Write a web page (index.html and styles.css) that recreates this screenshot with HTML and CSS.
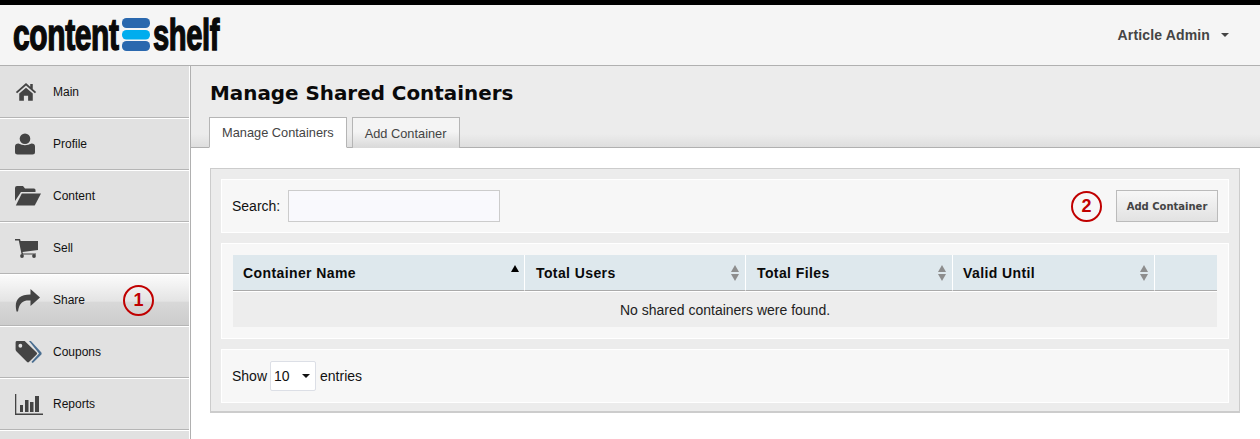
FILE: index.html
```html
<!DOCTYPE html>
<html lang="en">
<head>
<meta charset="utf-8">
<title>Manage Shared Containers</title>
<link rel="stylesheet" href="styles.css">
</head>
<body>
<header class="topbar">
  <div class="logo">
    <span class="logo-word logo-content">content</span>
    <svg class="logo-mark" width="28" height="33" viewBox="0 0 28 33"><rect x="0" y="0" width="28" height="10" rx="4.5" fill="#2a68ae"/><rect x="0" y="12" width="28" height="9.5" rx="4.5" fill="#00adee"/><rect x="0" y="23" width="28" height="10" rx="4.5" fill="#2a68ae"/></svg>
    <span class="logo-word logo-shelf">shelf</span>
  </div>
  <div class="user">Article Admin<span class="caret"></span></div>
</header>
<div class="shell">
  <nav class="sidebar">
    <a class="nav-item"><span class="nav-icon"><svg width="22" height="19" viewBox="0 0 26 22"><path fill="#444" d="M13 1 L1 11.5 L2.5 13 L13 4 L23.5 13 L25 11.5 L21 8 V2 H18 V5.4 Z M5 13.5 L13 6.5 L21 13.5 V22 H15.500 V16 H10.500 V22 H5 Z"/></svg></span>Main</a>
    <a class="nav-item"><span class="nav-icon"><svg width="20" height="22" viewBox="0 0 20 22"><circle cx="10" cy="5.8" r="5.3" fill="#444"/><path fill="#444" d="M0 13.500 Q0 10.500 3.500 10.500 Q10 14 16.500 10.500 Q20 10.500 20 13.500 V19 Q20 21.500 17.500 21.500 H2.500 Q0 21.500 0 19 Z"/></svg></span>Profile</a>
    <a class="nav-item"><span class="nav-icon"><svg width="26" height="20" viewBox="0 0 26 20"><path fill="#444" d="M0 2 Q0 0 2 0 H8 L10 2.500 H19 Q20.500 2.500 20.500 4 V6 H6 L0 15 Z"/><path fill="#444" d="M6.800 7.500 H26 L20 19 Q19.600 19.500 19 19.500 H0.800 Z"/></svg></span>Content</a>
    <a class="nav-item"><span class="nav-icon"><svg width="23" height="19" viewBox="0 0 23 19"><path fill="#444" d="M0 0 H5 L5.600 2 H23 V11 L7.500 13 L8 14.500 H21 V15.500 H6.600 L3.800 1.500 H0 Z"/><circle cx="7" cy="17" r="1.900" fill="#444"/><circle cx="19" cy="17" r="1.900" fill="#444"/></svg></span>Sell</a>
    <a class="nav-item is-active"><span class="nav-icon"><svg width="25" height="23" viewBox="0 0 25 23"><path fill="#444" d="M15.500 0 L25 8.500 L15.500 17 V11.500 C9 11 4.500 12.500 3 22.500 H1.500 C-1 12 3 5.500 15.500 5.500 Z"/></svg></span>Share<span class="callout callout-nav">1</span></a>
    <a class="nav-item"><span class="nav-icon"><svg width="27" height="22" viewBox="0 0 27 23"><path fill="#444" fill-rule="evenodd" d="M0 1.500 Q0 0 1.500 0 H9.500 L22 12 Q23 13 22 14 L14 22 Q13 23 12 22 L1 11 Q0 10 0 9 Z M5 3 A2 2 0 1 0 5 7 A2 2 0 1 0 5 3 Z"/><path fill="#4b6f91" d="M14 0 H16 L27 12 Q27.500 13 27 14 L18 23 L16.500 22 L24.500 13 Z"/></svg></span>Coupons</a>
    <a class="nav-item"><span class="nav-icon"><svg width="28" height="21" viewBox="0 0 28 21"><path fill="#444" d="M0 0 H1.300 V19.500 H28 V21 H0 Z"/><rect x="5" y="11" width="3" height="7" fill="#444"/><rect x="10" y="6" width="3.500" height="12" fill="#444"/><rect x="15" y="8" width="3.500" height="10" fill="#444"/><rect x="20" y="2" width="4" height="16" fill="#444"/></svg></span>Reports</a>
    <div class="nav-item"></div>
  </nav>
  <main class="main">
    <div class="page-head">
      <h1 class="title">Manage Shared Containers</h1>
      <div class="tabs">
        <a class="tab is-current">Manage Containers</a>
        <a class="tab">Add Container</a>
      </div>
    </div>
    <section class="content">
      <div class="box">
        <div class="panel panel-search">
          <label class="search">Search:<input class="search-input" type="text"></label>
          <div class="actions"><span class="callout">2</span><button class="btn" type="button">Add Container</button></div>
        </div>
        <div class="panel panel-table">
          <table class="grid">
            <colgroup><col class="c1"><col class="c2"><col class="c3"><col class="c4"><col class="c5"></colgroup>
            <thead>
              <tr>
                <th>Container Name<span class="sort-up"></span></th>
                <th>Total Users<span class="sort"></span></th>
                <th>Total Files<span class="sort"></span></th>
                <th>Valid Until<span class="sort"></span></th>
                <th></th>
              </tr>
            </thead>
            <tbody><tr><td colspan="5">No shared containers were found.</td></tr></tbody>
          </table>
        </div>
        <div class="panel panel-length">
          <span>Show</span>
          <span class="select">10<span class="select-caret"></span></span>
          <span>entries</span>
        </div>
      </div>
    </section>
  </main>
</div>
</body>
</html>
```
FILE: styles.css
```css
* { box-sizing: border-box; }
html, body { margin: 0; height: 100%; overflow: hidden; }
body { font-family: "Liberation Sans", Arial, sans-serif; background: #fff; color: #111; font-size: 14px; }

.topbar {
  height: 66px;
  border-top: 5px solid #000;
  border-bottom: 1px solid #b0b0b0;
  background: #f5f5f5;
  display: flex;
  align-items: center;
  justify-content: space-between;
  padding: 0 31px 0 13px;
}
.logo { display: flex; align-items: center; gap: 3px; margin-top: -1px; }
.logo-word {
  display: block;
  font-family: "Liberation Sans", sans-serif;
  font-weight: 700;
  font-size: 44px;
  line-height: 33px;
  letter-spacing: -0.5px;
  color: #0a0a0a;
  -webkit-text-stroke: 1.500px #0a0a0a;
  white-space: nowrap;
  transform-origin: left center;
}
.logo-content { width: 106px; transform: scaleX(0.68); }
.logo-shelf { width: 68px; transform: scaleX(0.66); }
.logo-mark { display: block; }
.user { font-size: 14px; font-weight: 700; color: #444; letter-spacing: 0.15px; display: flex; align-items: center; margin-top: -1px; }
.caret { width: 0; height: 0; margin-left: 11px; border: 4.500px solid transparent; border-top-color: #444; border-bottom: 0; }

.shell { display: flex; height: 373px; }
.sidebar { width: 191px; flex: none; border-right: 1px solid #b0b0b0; padding-right: 1px; overflow: hidden; }
.nav-item {
  height: 52px;
  display: flex;
  align-items: center;
  font-size: 12px;
  color: #111;
  background: #e1e1e1;
  border-bottom: 1px solid #b5b5b5;
  border-top: 1px solid #fff;
}
.nav-item:first-child { border-top: 0; }
.nav-item.is-active { background: linear-gradient(#fbfbfb, #e4e4e4 52%, #d8d8d8 55%, #cccccc); }
.nav-icon { width: 53px; flex: none; display: flex; padding-left: 15px; align-items: center; }
.callout {
  width: 31px; height: 31px; flex: none;
  display: flex; align-items: center; justify-content: center;
  border: 2px solid #c00000; border-radius: 50%;
  color: #c00000; font-size: 18px; font-weight: 700;
  background: transparent;
}
.callout-nav { margin-left: 38px; }

.main { flex: 1; min-width: 0; display: flex; flex-direction: column; }
.page-head {
  height: 82px;
  padding: 15px 0 0 19px;
  background: linear-gradient(#ececec 68px, #dedede);
  border-bottom: 1px solid #b0b0b0;
  display: flex; flex-direction: column; justify-content: space-between;
}
.title { margin: 0; font-family: "DejaVu Sans", Verdana, sans-serif; font-size: 19.900px; line-height: 25px; font-weight: 700; color: #0a0a0a; }
.tabs { display: flex; gap: 5px; margin-left: -1px; margin-bottom: -1px; }
.tab {
  height: 31px; padding: 0 12px;
  display: flex; align-items: center;
  font-size: 12.800px; color: #444;
  border: 1px solid #b5b5b5;
  border-bottom: 0;
  background: linear-gradient(#f4f4f4 45%, #d9d9d9);
}
.tab.is-current { background: #fff; border-bottom: 1px solid #fff; }

.content { padding: 20px 20px 0 19px; }
.box {
  width: 1030px; height: 245px;
  border: 1px solid #ccc; border-bottom-width: 2px;
  background: #ececec;
  padding: 10px 10px 0 10px;
  display: flex; flex-direction: column; gap: 10px;
}
.panel { background: #f7f7f7; border: 1px solid #fff; }
.panel-search { height: 54px; display: flex; align-items: center; justify-content: space-between; padding: 0 10px 0 10px; }
.search { display: flex; align-items: center; gap: 8px; }
.search-input { width: 212px; height: 32px; border: 1px solid #ccc; background: #f9f9fd; padding: 0; }
.actions { display: flex; align-items: center; gap: 14px; }
.btn {
  width: 102px; height: 32px; padding: 0;
  font-family: "DejaVu Sans", Verdana, sans-serif; font-size: 10px; font-weight: 700; color: #444;
  border: 1px solid #bbb;
  background: linear-gradient(#f7f7f7, #e2e2e2);
}
.panel-table { height: 96px; padding: 11px 11px 0 11px; }
.grid { width: 984px; border-collapse: separate; border-spacing: 0; table-layout: fixed; }
.c1 { width: 292px; } .c2 { width: 221px; } .c3 { width: 207px; } .c4 { width: 202px; } .c5 { width: 62px; }
.grid th {
  height: 36px; padding: 1px 0 0 11px;
  background: #dee8ed;
  border-bottom: 1px solid #aaa;
  border-right: 1px solid #fff;
  text-align: left;
  font-size: 14px; font-weight: 700; color: #0a0a0a; letter-spacing: 0.4px;
  position: relative;
}
.grid th:first-child, .grid th:nth-child(4) { padding-left: 10px; }
.grid th:last-child { border-right: 0; }
.grid td { height: 36px; background: #ededed; text-align: center; font-size: 14px; color: #222; border-top: 1px solid #fff; }
.sort-up { position: absolute; right: 5px; top: 10px; border: 4.500px solid transparent; border-bottom: 7px solid #000; border-top: 0; }
.sort { position: absolute; right: 5px; top: 10px; width: 9px; height: 16px; }
.sort::before { content: ""; position: absolute; top: 0; left: 0; border: 4.500px solid transparent; border-bottom: 7px solid #8d8d8d; border-top: 0; }
.sort::after { content: ""; position: absolute; bottom: 0; left: 0; border: 4.500px solid transparent; border-top: 7px solid #8d8d8d; border-bottom: 0; }
.panel-length { height: 54px; padding: 0 0 0 10px; display: flex; align-items: center; gap: 4px; }
.select {
  width: 46px; height: 30px; margin-left: -1px; display: flex; align-items: center; justify-content: space-between;
  padding: 0 4px 0 3px; background: #fff; border: 1px solid #dcdfe6; border-radius: 2px;
  font-size: 14px;
}
.select-caret { border: 4px solid transparent; border-top: 4.500px solid #111; border-bottom: 0; margin-right: 1px; }
```
